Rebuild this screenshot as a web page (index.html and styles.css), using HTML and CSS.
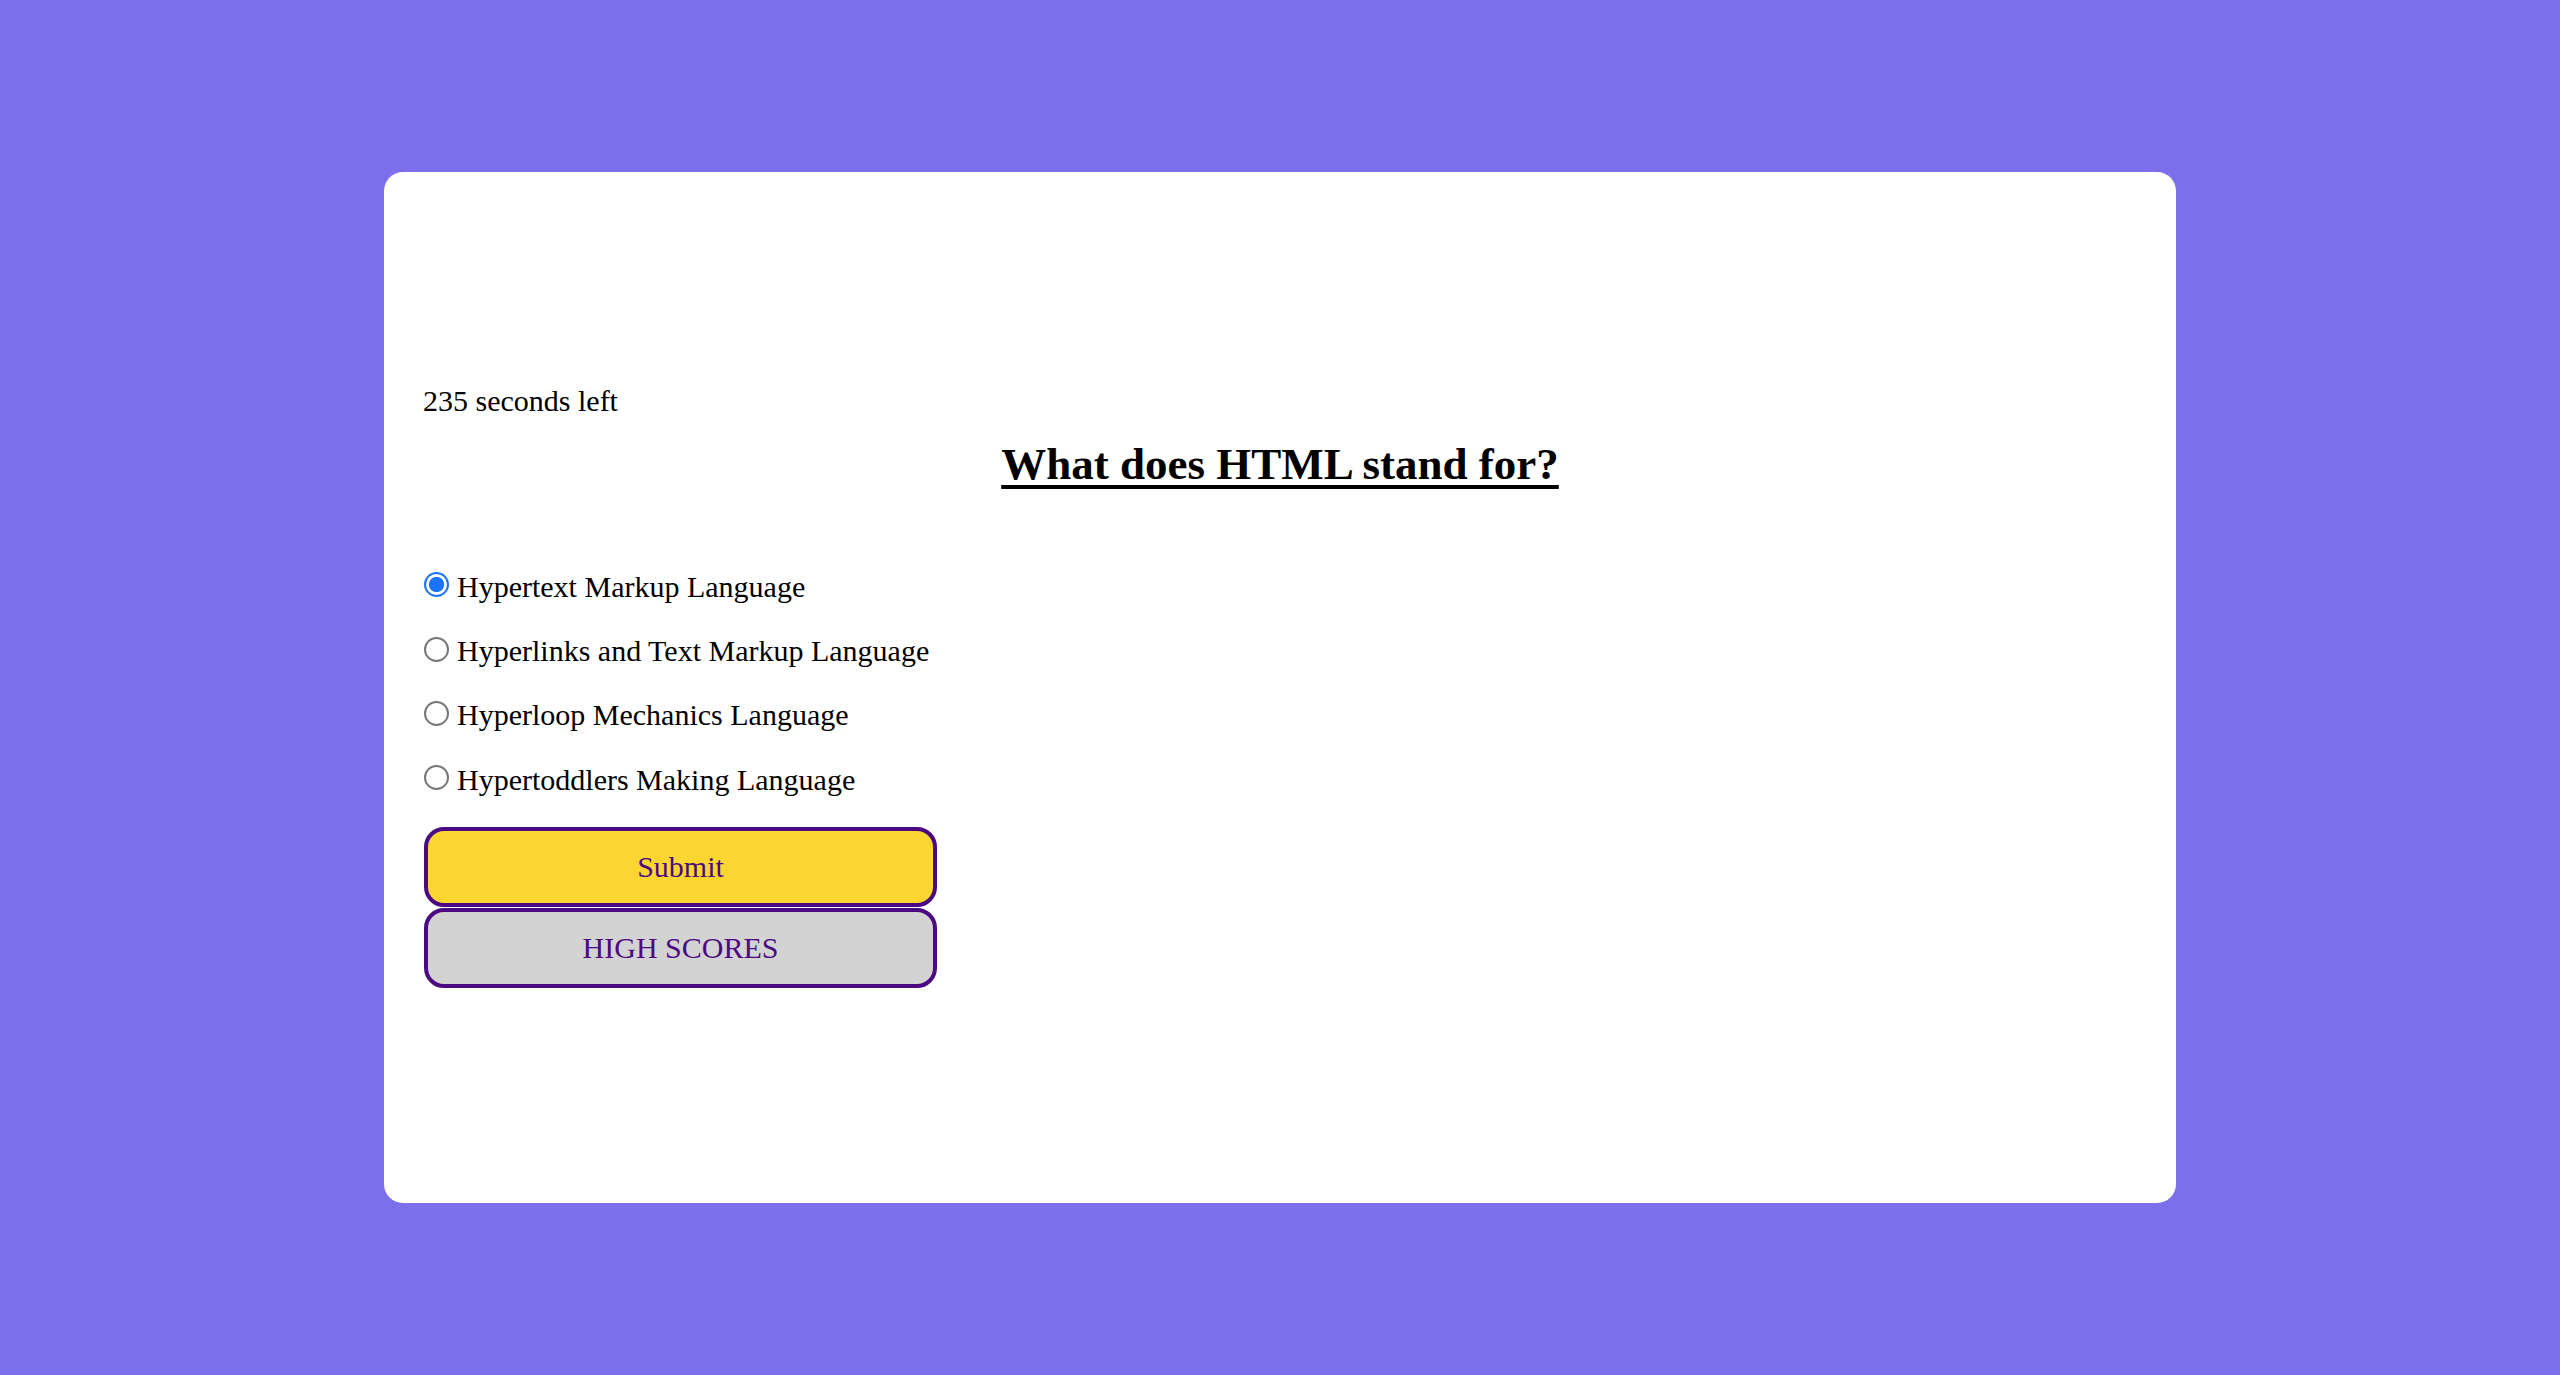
FILE: index.html
```html
<!DOCTYPE html>
<html lang="en">
<head>
<meta charset="utf-8">
<title>Quiz</title>
<link rel="stylesheet" href="styles.css">
</head>
<body>
<main class="card">
  <div class="content">
    <p class="timer">235 seconds left</p>
    <h2 class="question">What does HTML stand for?</h2>
    <form class="options">
      <label class="option"><input type="radio" name="answer" class="radio" checked><span>Hypertext Markup Language</span></label>
      <label class="option"><input type="radio" name="answer" class="radio"><span>Hyperlinks and Text Markup Language</span></label>
      <label class="option"><input type="radio" name="answer" class="radio"><span>Hyperloop Mechanics Language</span></label>
      <label class="option"><input type="radio" name="answer" class="radio"><span>Hypertoddlers Making Language</span></label>
    </form>
    <div class="buttons">
      <button type="button" class="btn btn-submit">Submit</button>
      <button type="button" class="btn btn-scores">HIGH SCORES</button>
    </div>
  </div>
</main>
</body>
</html>
```

FILE: styles.css
```css
html, body {
  margin: 0;
  padding: 0;
}

body {
  background: #7b6fec;
  height: 100vh;
  display: flex;
  align-items: center;
  justify-content: center;
  font-family: "Liberation Serif", "Times New Roman", serif;
  font-size: 30px;
  color: #000;
}

.card {
  width: 1792px;
  height: 1031px;
  box-sizing: border-box;
  background: #fff;
  border-radius: 19px;
  padding: 0 40px;
  display: flex;
  flex-direction: column;
  justify-content: center;
}

.content {
  display: flex;
  flex-direction: column;
  padding-bottom: 3px;
}

.timer {
  margin: 0;
  line-height: 34px;
  height: 34px;
  margin-left: -1px;
}

.question {
  margin: 20px 0 0;
  font-size: 45px;
  line-height: 52px;
  font-weight: bold;
  text-align: center;
  text-decoration: underline;
  text-decoration-thickness: 4px;
  text-underline-offset: 6px;
}

.options {
  margin: 65px 0 0;
  display: flex;
  flex-direction: column;
}

.option {
  height: 64.33px;
  display: flex;
  align-items: center;
  line-height: 34px;
}

.radio {
  appearance: none;
  -webkit-appearance: none;
  width: 25px;
  height: 25px;
  margin: 0 8px 0 0;
  box-sizing: border-box;
  border: 2px solid #767676;
  border-radius: 50%;
  background: #fff;
  flex: none;
  position: relative;
  top: -2px;
}

.radio:checked {
  border-color: #1a74ff;
  background: radial-gradient(circle, #1a74ff 0 7.2px, #fff 8px);
}

.buttons {
  margin-top: 15.4px;
  display: flex;
  flex-direction: column;
  gap: 1px;
  width: 513px;
}

.btn {
  height: 80px;
  box-sizing: border-box;
  border: 4px solid #4b0a82;
  border-radius: 20px;
  font-family: "Liberation Serif", "Times New Roman", serif;
  font-size: 30px;
  color: #4b0a82;
  padding: 0;
}

.btn-submit {
  background: #fcd630;
}

.btn-scores {
  background: #d3d3d3;
}
```
